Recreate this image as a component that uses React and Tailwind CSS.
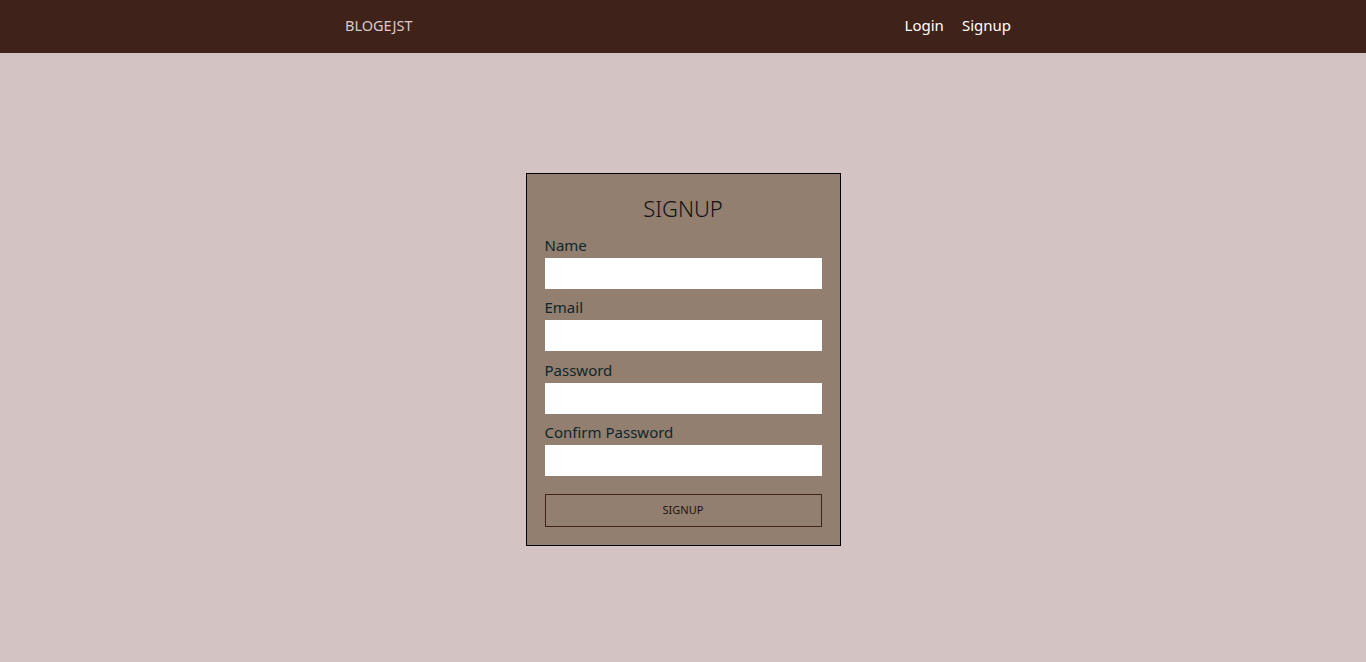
import React, { useState } from "react";

const FIELDS = [
  { name: "name", label: "Name", type: "text" },
  { name: "email", label: "Email", type: "email" },
  { name: "password", label: "Password", type: "password" },
  { name: "confirm", label: "Confirm Password", type: "password" },
];

const App = () => {
  const [form, setForm] = useState({ name: "", email: "", password: "", confirm: "" });

  const handleChange = (e) => {
    setForm({ ...form, [e.target.name]: e.target.value });
  };

  return (
    <div className="min-h-[662px] bg-[#d3c4c3] font-['Noto_Sans',sans-serif]">
      {/* navbar */}
      <nav className="h-[53px] bg-[#3f2219]">
        <div className="w-[676px] mx-auto pr-[10px] pb-[2px] h-full flex items-center justify-between">
          <span className="text-[14.5px] text-[#dcc9c9]">BLOGEJST</span>
          <div className="flex items-center gap-[18px] text-[15px] text-white">
            <a href="#">Login</a>
            <a href="#">Signup</a>
          </div>
        </div>
      </nav>

      {/* signup card */}
      <div className="flex justify-center pt-[120px]">
        <form
          className="w-[315px] bg-[#927f6f] border border-black px-[18px] pt-[19px] pb-[18px]"
          onSubmit={(e) => e.preventDefault()}
        >
          <h2 className="text-center text-[22px] font-light leading-[30px] text-[#161010] mb-[11px]">SIGNUP</h2>
          {FIELDS.map((f) => (
            <div key={f.name} className="mb-[7.4px]">
              <label className="block text-[15px] leading-[22px] text-[#10262a] mb-[2px]">{f.label}</label>
              <input
                type={f.type}
                name={f.name}
                value={form[f.name]}
                onChange={handleChange}
                className="block w-full h-[31px] bg-white outline-none px-2 text-[14px]"
              />
            </div>
          ))}
          <button
            type="submit"
            className="mt-[10px] w-full h-[33px] border border-[#3f2219] text-[11px] text-[#1c1410]"
          >
            SIGNUP
          </button>
        </form>
      </div>
    </div>
  );
};

export default App;
